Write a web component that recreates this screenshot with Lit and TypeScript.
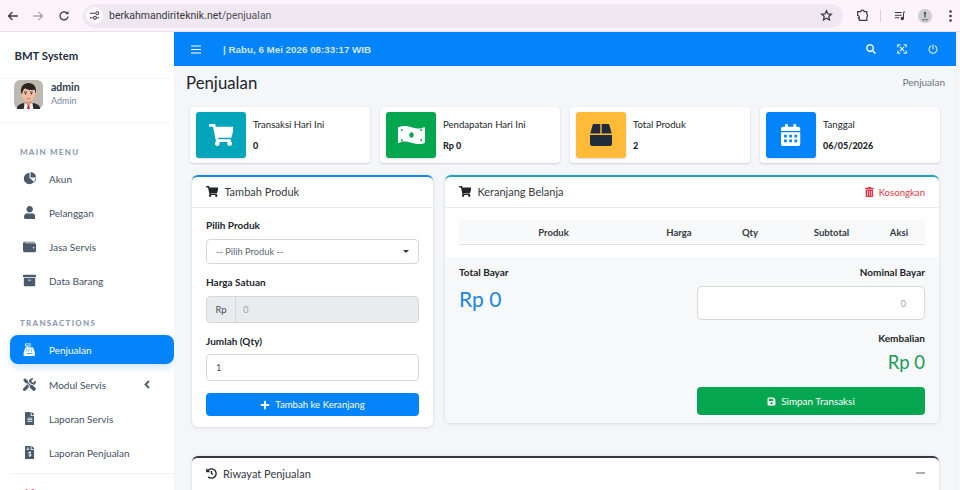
import { LitElement, html, css } from "lit";
import { customElement } from "lit/decorators.js";

const fa = (vb: string, d: string, cls = "") =>
  html`<svg class="fa ${cls}" viewBox="${vb}" fill="currentColor" fill-rule="evenodd"><path d="${d}"></path></svg>`;

const CART = "M528.12 301.319l47.273-208C578.806 78.301 567.391 64 551.99 64H159.208l-9.166-44.81C147.758 8.021 137.93 0 126.529 0H24C10.745 0 0 10.745 0 24v16c0 13.255 10.745 24 24 24h69.883l70.248 343.435C147.325 417.1 136 435.222 136 456c0 30.928 25.072 56 56 56s56-25.072 56-56c0-15.674-6.447-29.835-16.824-40h209.647C430.447 426.165 424 440.326 424 456c0 30.928 25.072 56 56 56s56-25.072 56-56c0-22.172-12.888-41.332-31.579-50.405l5.517-24.276c3.413-15.018-8.002-29.319-23.403-29.319H218.117l-6.545-32h293.145c11.206 0 20.92-7.754 23.403-18.681z";
const USER = "M224 256c70.7 0 128-57.3 128-128S294.7 0 224 0 96 57.3 96 128s57.3 128 128 128zm89.6 32h-16.7c-22.2 10.2-46.9 16-72.9 16s-50.6-5.8-72.9-16h-16.7C60.2 288 0 348.2 0 422.4V464c0 26.5 21.5 48 48 48h352c26.5 0 48-21.5 48-48v-41.6c0-74.2-60.2-134.4-134.4-134.4z";
const SEARCH = "M505 442.7L405.3 343c-4.5-4.5-10.6-7-17-7H372c27.6-35.3 44-79.7 44-128C416 93.1 322.9 0 208 0S0 93.1 0 208s93.1 208 208 208c48.3 0 92.7-16.4 128-44v16.3c0 6.4 2.5 12.5 7 17l99.7 99.7c9.4 9.4 24.6 9.4 33.9 0l28.3-28.3c9.4-9.4 9.4-24.6.1-34zM208 336c-70.7 0-128-57.2-128-128 0-70.7 57.2-128 128-128 70.7 0 128 57.2 128 128 0 70.7-57.2 128-128 128z";
const PLUS = "M416 208H272V64c0-17.67-14.33-32-32-32h-32c-17.67 0-32 14.33-32 32v144H32c-17.67 0-32 14.33-32 32v32c0 17.67 14.33 32 32 32h144v144c0 17.67 14.33 32 32 32h32c17.67 0 32-14.33 32-32V304h144c17.67 0 32-14.33 32-32v-32c0-17.67-14.33-32-32-32z";
const PIE = "M256 32a224 224 0 1 0 224 224H256zM296 0v216h216A216 216 0 0 0 296 0zM300 260h212a216 216 0 0 1-62 150z";
const WALLET = "M462 128H80a16 16 0 0 1 0-32h384a16 16 0 0 0 0-32H64a64 64 0 0 0-64 64v288a64 64 0 0 0 64 64h398c28 0 50-21 50-48V176c0-27-22-48-50-48zm-46 208a32 32 0 1 1 0-64 32 32 0 0 1 0 64z";
const ARCHIVE = "M32 448c0 18 14 32 32 32h384c18 0 32-14 32-32V160H32zm160-212c0-7 5-12 12-12h104c7 0 12 5 12 12v8c0 7-5 12-12 12H204c-7 0-12-5-12-12zM480 32H32C14 32 0 46 0 64v48c0 9 7 16 16 16h480c9 0 16-7 16-16V64c0-18-14-32-32-32z";
const REGISTER = "M80 20h220v110H200v40h170a40 40 0 0 1 38 28l60 190v90a32 32 0 0 1-32 32H56a32 32 0 0 1-32-32v-90l60-190a40 40 0 0 1 38-28h38v-40H80zM112 52v46h156V52zM130 230v30h40v-30zm90 0v30h40v-30zm90 0v30h40v-30zM110 300v30h40v-30zm90 0v30h40v-30zm110 0v30h40v-30zM150 395v30h220v-30z";
const TOOLS = "M502 404L386 288c-22-22-55-27-82-13L198 169v-62L71 12 7 76l95 127h62l106 106c-13 27-8 60 14 82l116 116c14 14 38 14 52 0l50-51c14-14 14-37 0-52zM331 224c28 0 55 11 76 31l19 19c16-7 30-17 43-29 35-36 47-86 36-132-2-9-13-12-19-5l-74 74-68-11-11-68 74-74c7-7 3-18-6-20-46-11-96 1-132 36-27 27-39 63-38 98l82 82c6-1 12-1 18-1zM227 306l-57-57L17 402c-25 25-25 65 0 90s65 25 90 0l124-124c-8-20-9-42-4-62z";
const DOC = "M224 136V0H24C11 0 0 11 0 24v464c0 13 11 24 24 24h336c13 0 24-11 24-24V160H248c-13 0-24-11-24-24zm64 236c0 7-5 12-12 12H108c-7 0-12-5-12-12v-8c0-7 5-12 12-12h168c7 0 12 5 12 12zm0-64c0 7-5 12-12 12H108c-7 0-12-5-12-12v-8c0-7 5-12 12-12h168c7 0 12 5 12 12zm0-72v8c0 7-5 12-12 12H108c-7 0-12-5-12-12v-8c0-7 5-12 12-12h168c7 0 12 5 12 12zm96-114v6H256V0h6c6 0 12 3 17 7l98 98c4 5 7 11 7 17z";
const DOCUSD = "M377 105L279 7c-5-4-11-7-17-7h-6v128h128v-6c0-6-3-12-7-17zm-153 31V0H24C11 0 0 11 0 24v464c0 13 11 24 24 24h336c13 0 24-11 24-24V160H248c-13 0-24-11-24-24zM64 72c0-4 4-8 8-8h80c4 0 8 4 8 8v16c0 4-4 8-8 8H72c-4 0-8-4-8-8zm0 64c0-4 4-8 8-8h80c4 0 8 4 8 8v16c0 4-4 8-8 8H72c-4 0-8-4-8-8zm144 263v24c0 4-4 8-8 8h-16c-4 0-8-4-8-8v-24c-11-1-22-5-32-11-4-2-4-8-1-11l12-11c3-3 7-3 10-1 4 2 8 3 12 3h28c7 0 12-6 12-13 0-6-4-11-9-12l-45-14c-19-6-32-24-32-44 0-25 19-45 45-46v-24c0-4 4-8 8-8h16c4 0 8 4 8 8v24c11 1 22 5 32 11 4 2 4 8 1 11l-12 11c-3 3-7 3-10 1-4-2-8-3-12-3h-28c-7 0-12 6-12 13 0 6 4 11 9 12l45 14c19 6 32 24 32 44 0 25-19 45-45 46z";
const BOX = "M3.800 0H10.300V9.500H.3L2.600.9A1.200 1.200 0 0 1 3.800 0zM11.700 0H18.200A1.200 1.200 0 0 1 19.400.9L21.700 9.500H11.700zM0 11H22V20A2 2 0 0 1 20 22H2A2 2 0 0 1 0 20z";
const CALENDAR = "M12 192h424c7 0 12 5 12 12v260c0 27-21 48-48 48H48c-27 0-48-21-48-48V204c0-7 5-12 12-12zM72 248v64h64v-64zm120 0v64h64v-64zm120 0v64h64v-64zM72 360v64h64v-64zm120 0v64h64v-64zm120 0v64h64v-64zM448 148v-36c0-27-21-48-48-48h-48V12c0-7-5-12-12-12h-40c-7 0-12 5-12 12v52H160V12c0-7-5-12-12-12h-40c-7 0-12 5-12 12v52H48C21 64 0 85 0 112v36c0 7 5 12 12 12h424c7 0 12-5 12-12z";
const TRASH = "M32 464a48 48 0 0 0 48 48h288a48 48 0 0 0 48-48V128H32zm272-256a16 16 0 0 1 32 0v224a16 16 0 0 1-32 0zm-96 0a16 16 0 0 1 32 0v224a16 16 0 0 1-32 0zm-96 0a16 16 0 0 1 32 0v224a16 16 0 0 1-32 0zM432 32H312l-9-19a24 24 0 0 0-22-13H167a24 24 0 0 0-21 13l-9 19H16A16 16 0 0 0 0 48v32a16 16 0 0 0 16 16h416a16 16 0 0 0 16-16V48a16 16 0 0 0-16-16z";
const SAVE = "M433.9 129.900l-83.900-83.900A48 48 0 0 0 316.100 32H48C21.500 32 0 53.500 0 80v352c0 26.500 21.500 48 48 48h352c26.500 0 48-21.500 48-48V163.900a48 48 0 0 0-14.100-34zM224 416c-35.300 0-64-28.700-64-64s28.700-64 64-64 64 28.700 64 64-28.700 64-64 64zM320 112V212c0 6.600-5.400 12-12 12H76c-6.600 0-12-5.400-12-12V108c0-6.600 5.400-12 12-12h228c9 0 16 7 16 16z";
const HISTORY = "M504 255.500C504 392 392.500 504 256 504c-59 0-113-20.600-155.600-55-11-8.900-11.900-25.400-1.900-35.400l11.300-11.300c8.600-8.600 22.300-9.500 31.800-1.900C173.100 425.100 212.800 440 256 440c101.700 0 184-82.300 184-184S357.700 72 256 72c-48.800 0-93.100 19-126.100 49.900l50.800 50.800c10.100 10.100 2.900 27.300-11.300 27.300H24c-8.800 0-16-7.200-16-16V38.600c0-14.300 17.200-21.400 27.300-11.300l49.400 49.400C129.400 32.100 189.500 8 256 8c136.500 0 248 111.500 248 247.500zM272 136h-32c-8.800 0-16 7.200-16 16v113l70 54c7 5.400 17 4.200 22.500-2.800l19.600-25.200c5.400-7 4.200-17-2.800-22.500L288 240v-88c0-8.800-7.200-16-16-16z";
const MONEY = "M24 40C110 0 200 10 320 46S530 90 616 44C628 38 640 46 640 58V398C640 406 636 412 630 416 540 456 450 450 320 414S110 372 24 416C12 422 0 414 0 402V58C0 50 18 43 24 40zM320 165C290 165 268 194 268 230S290 295 320 295 372 266 372 230 350 165 320 165zM90 90A24 24 0 1 0 90 138 24 24 0 1 0 90 90zM550 85A24 24 0 1 0 550 133 24 24 0 1 0 550 85zM90 330A24 24 0 1 0 90 378 24 24 0 1 0 90 330zM550 325A24 24 0 1 0 550 373 24 24 0 1 0 550 325z";
const POWER_PATH = "M400 54c80 50 112 120 112 202 0 137-111 248-248 248S16 393 16 256c0-82 32-152 112-202 14-9 34-4 42 11l14 26c7 13 4 30-9 38-48 33-73 75-73 127 0 84 68 152 152 152s152-68 152-152c0-52-25-94-73-127-13-8-16-25-9-38l14-26c8-15 28-20 42-11z";

const EXPAND = html`<svg class="fa" viewBox="0 0 24 24" fill="none" stroke="currentColor" stroke-width="3"><path d="M7 7l10 10M17 7L7 17"></path><path d="M2 8V2h6M16 2h6v6M22 16v6h-6M8 22H2v-6"></path></svg>`;
const POWER = html`<svg class="fa" viewBox="0 0 24 24" fill="none" stroke="currentColor" stroke-width="2.500" stroke-linecap="round"><path d="M12 2v10"></path><path d="M7 4.800a9.500 9.500 0 1 0 10 0"></path></svg>`;
const AVATAR = html`<svg class="avatar" viewBox="0 0 30 30">
  <rect width="30" height="30" rx="6" fill="#bdb8b0"></rect>
  <path d="M3 30c0-5 5-6 12-7 7 1 12 2 12 7z" fill="#2b2b30"></path>
  <path d="M11 23l4 3 4-3 1 7H10z" fill="#f2f2f2"></path><path d="M14.300 25h1.400l.6 5h-2.600z" fill="#c8202a"></path>
  <path d="M12 19h6v5l-3 2-3-2z" fill="#d89c82"></path>
  <ellipse cx="15" cy="14" rx="7" ry="8.500" fill="#efbfa4"></ellipse>
  <path d="M7.500 14C6 7 10 3 15 3s9 4 7.500 11l-1-4c-3 .5-8 .5-10-1.500-1 1-2.500 2-3 5.500z" fill="#2a2524"></path>
  <path d="M10.500 12.500h3M16.500 12.500h3" stroke="#2a2524" stroke-width=".9"></path>
  <circle cx="12" cy="14.300" r=".8" fill="#2a2524"></circle><circle cx="18" cy="14.300" r=".8" fill="#2a2524"></circle>
  <path d="M12.800 19c1.500.8 3 .8 4.400 0" stroke="#a8503f" stroke-width=".7" fill="none"></path>
</svg>`;

const menu1 = [
  ["Akun", fa("0 0 512 512", PIE)],
  ["Pelanggan", fa("0 0 448 512", USER)],
  ["Jasa Servis", fa("0 0 512 512", WALLET)],
  ["Data Barang", fa("0 0 512 512", ARCHIVE)],
] as const;

@customElement("browser-bar")
class BrowserBar extends LitElement {
  static styles = css`
    :host { display: flex; align-items: center; height: 32px; background: #fdf4fb; border-bottom: 1px solid #e6e0e8; box-sizing: border-box; color: #3c3a41; }
    svg { display: block; flex: none; }
    .nav { width: 12px; height: 12px; margin-left: 7px; }
    .nav.dim { color: #a9a6ad; margin-left: 13px; }
    .nav.re { margin-left: 14px; }
    .url { flex: 1; height: 24px; margin: 0 0 0 13px; background: #efe8f2; border-radius: 12px; display: flex; align-items: center; padding: 0 10.500px 0 3px; font: 10.500px "Roboto", sans-serif; color: #3a3840; }
    .tune { width: 17px; height: 17px; border-radius: 50%; background: #fdf9fd; display: grid; place-items: center; margin-right: 6px; }
    .tune svg { width: 11px; height: 11px; }
    .path { color: #55525a; }
    .star { width: 13px; height: 13px; margin-left: auto; }
    .puzzle { width: 13px; height: 13px; margin-left: 13px; }
    .sep { width: 1px; height: 12px; background: #d9d4dc; margin-left: 11px; }
    .queue { width: 12px; height: 12px; margin-left: 13px; }
    .prof { width: 14px; height: 14px; margin-left: 12px; border-radius: 50%; background: #cfcfd2; }
    .dots { width: 3px; height: 12px; margin-left: 16.500px; margin-right: 8.500px; }
  `;
  render() {
    return html`
      <svg class="nav" viewBox="0 0 12 12" fill="none" stroke="currentColor" stroke-width="1.300"><path d="M11 6H1.500M5.500 2L1.500 6l4 4"></path></svg>
      <svg class="nav dim" viewBox="0 0 12 12" fill="none" stroke="currentColor" stroke-width="1.300"><path d="M1 6h9.500M6.500 2l4 4-4 4"></path></svg>
      <svg class="nav re" viewBox="0 0 12 12" fill="none" stroke="currentColor" stroke-width="1.300"><path d="M10 6.500A4 4 0 1 1 8.800 3"></path><path d="M10.500 1v3.200H7.300z" fill="currentColor" stroke="none"></path></svg>
      <div class="url">
        <span class="tune"><svg viewBox="0 0 12 12" fill="none" stroke="#3c3a41" stroke-width="1.100"><path d="M1 3.500h5.500M1 8.500h3"></path><circle cx="9" cy="3.500" r="1.600"></circle><circle cx="6.500" cy="8.500" r="1.600"></circle><path d="M9 8.500h2"></path></svg></span>
        <span>berkahmandiriteknik.net<span class="path">/penjualan</span></span>
        <svg class="star" viewBox="0 0 24 24" fill="none" stroke="currentColor" stroke-width="2.200"><path d="M12 3l2.700 6 6.300.6-4.800 4.300 1.500 6.400L12 17l-5.700 3.300 1.500-6.400L3 9.600 9.300 9z"></path></svg>
      </div>
      <svg class="puzzle" viewBox="0 0 24 24" fill="none" stroke="currentColor" stroke-width="2.200"><path d="M3 5h6a3 3 0 0 1 6 0h5v5a3 3 0 0 1 0 5v6H6v-4H3c2 0 3-1 3-2.500S5 12 3 12z"></path></svg>
      <span class="sep"></span>
      <svg class="queue" viewBox="0 0 14 14" fill="none" stroke="currentColor" stroke-width="1.200"><path d="M1 3h8M1 6h8M1 9h5"></path><path d="M11 2.500V10"></path><circle cx="9.700" cy="10" r="1.400" fill="currentColor"></circle><path d="M11 2.500h2"></path></svg>
      <svg class="prof" viewBox="0 0 14 14"><circle cx="7" cy="7" r="7" fill="#cfcfd2"></circle><path d="M7 2l1.500 3H7.600v3.500H6.400V5H5.500zM4 10.500h6v.7H4z" fill="#3d4658"></path></svg>
      <svg class="dots" viewBox="0 0 3 12" fill="currentColor"><circle cx="1.500" cy="1.500" r="1.300"></circle><circle cx="1.500" cy="6" r="1.300"></circle><circle cx="1.500" cy="10.500" r="1.300"></circle></svg>
    `;
  }
}

@customElement("side-bar")
class SideBar extends LitElement {
  static styles = css`
    :host { display: block; width: 174px; flex: none; background: #fff; overflow: hidden; font-family: "Lato", "Noto Sans", sans-serif; }
    .brand { height: 47px; display: flex; align-items: center; padding-left: 14.500px; font-size: 11.300px; font-weight: 700; color: #1f2d3d; border-bottom: 1px solid #f3f4f6; box-sizing: border-box; }
    .user { height: 44px; display: flex; gap: 8px; padding: 1px 0 0 14px; box-sizing: border-box; border-bottom: 1px solid #f3f4f6; margin-right: 5px; }
    .avatar { width: 29px; height: 29px; display: block; flex: none; }
    .names { display: flex; flex-direction: column; }
    .nm { font-size: 10.500px; font-weight: 700; color: #2f3d50; line-height: 14px; }
    .rl { font-size: 9px; color: #73859b; line-height: 13px; }
    .hd { font-size: 8px; font-weight: 900; letter-spacing: 1.250px; color: #8f9db0; padding-left: 20px; line-height: 10px; }
    .hd.a { margin-top: 24px; margin-bottom: 5px; }
    .hd.b { margin-top: 20px; margin-bottom: 7px; }
    .it { height: 34px; display: flex; align-items: center; padding-left: 13px; margin-left: 10px; font-size: 10px; color: #3f4f60; position: relative; box-sizing: border-box; }
    .ic { width: 13px; height: 13px; display: grid; place-items: center; margin-right: 13px; color: #4b5b6c; flex: none; margin-top: -1px; }
    .fa { display: block; height: 13px; max-width: 14px; }
    .active { height: 29px; margin: 0 0 4px 10px; background: #0384fb; color: #fff; border-radius: 8px; box-shadow: 0 3px 8px rgba(3, 132, 251, .22); }
    .active .ic { color: #fff; }
    .chev { position: absolute; left: 134px; top: 12px; width: 6px; height: 9px; color: #4b5b6c; }
    .rule { height: 1px; background: #f0f1f3; margin: 3px 0 0 10px; }
    .log { height: 16px; padding: 14px 0 0 23px; box-sizing: content-box; color: #dc3545; }
  `;
  render() {
    const item = (n: string, i: unknown) => html`<div class="it"><span class="ic">${i}</span>${n}</div>`;
    return html`
      <div class="brand">BMT System</div>
      <div class="user">${AVATAR}<div class="names"><span class="nm">admin</span><span class="rl">Admin</span></div></div>
      <div class="hd a">MAIN MENU</div>
      ${menu1.map(([n, i]) => item(n, i))}
      <div class="hd b">TRANSACTIONS</div>
      <div class="it active"><span class="ic">${fa("0 0 512 512", REGISTER)}</span>Penjualan</div>
      <div class="it"><span class="ic">${fa("0 0 512 512", TOOLS)}</span>Modul Servis
        <svg class="chev" viewBox="0 0 6 9" fill="none" stroke="currentColor" stroke-width="1.800"><path d="M5 1L1.500 4.500 5 8"></path></svg></div>
      ${item("Laporan Servis", fa("0 0 384 512", DOC))}
      ${item("Laporan Penjualan", fa("0 0 384 512", DOCUSD))}
      <div class="rule"></div>
      <div class="log">${fa("0 0 512 512", POWER_PATH)}</div>
    `;
  }
}

@customElement("app-root")
class AppRoot extends LitElement {
  static styles = css`
    :host { display: block; width: 960px; height: 490px; overflow: hidden; background: #f4f6f9; font-family: "Lato", "Noto Sans", sans-serif; color: #212529; }
    * { box-sizing: border-box; }
    .fa { display: block; }
    .body { display: flex; height: 458px; }
    .main { flex: 1; min-width: 0; display: flex; flex-direction: column; }
    .scroll { width: 4px; flex: none; background: #f4f6f9; border-left: 1px solid #eceef2; }
    .nav { height: 34px; flex: none; background: #0384fb; display: flex; align-items: center; padding: 0 18px 0 17px; color: #fff; }
    .nav .burger { width: 10px; height: 9px; }
    .clock { margin-left: 22px; font: 700 9.800px "Liberation Sans", sans-serif; color: #cfe6ff; }
    .nicons { margin-left: auto; display: flex; gap: 21px; color: #e3f0ff; }
    .nicons .fa { width: 10px; height: 10px; }
    .page { flex: 1; min-height: 0; overflow: hidden; padding: 0 16px 0 11px; }
    .ph { display: flex; justify-content: space-between; align-items: center; height: 36px; padding-bottom: 4px; }
    h1 { margin: 0 0 0 1px; font-size: 16.800px; font-weight: 400; color: #212529; }
    .crumb { font-size: 10px; color: #6c757d; margin-top: -1px; margin-right: -5px; }
    .stats { display: grid; grid-template-columns: repeat(4, 180px); gap: 10px; margin: 5px 0 0 5px; }
    .stat { height: 56px; background: #fff; border-radius: 3px; box-shadow: 0 0 1px rgba(0,0,0,.14), 0 1px 2px rgba(0,0,0,.14); padding: 5px 6px; display: flex; gap: 7px; }
    .box { width: 50px; height: 46px; border-radius: 3px; display: grid; place-items: center; color: #fff; flex: none; box-shadow: 0 1px 2px rgba(0,0,0,.15); }
    .box .fa { height: 22px; max-width: 27px; }
    .teal { background: #02a5ba; } .green { background: #04a650; } .yellow { background: #ffba38; color: #1f2d3d; } .blue { background: #0384fb; }
    .st { display: flex; flex-direction: column; font-size: 9.600px; padding-top: 6px; }
    .st b { font-size: 9px; margin-top: 8px; font-weight: 900; line-height: 13px; }
    .st span { line-height: 13px; }
    .cols { display: grid; grid-template-columns: 241px 494px; gap: 12px; align-items: start; margin: 12px 0 0 7px; }
    .card { background: #fff; border-radius: 6px; border-top: 2px solid; box-shadow: 0 0 2px rgba(0,0,0,.08), 0 1px 4px rgba(0,0,0,.09); }
    .cb { border-color: #1a86e8; } .ct { border-color: #1fa2b8; }
    .ch { height: 31px; display: flex; align-items: center; padding: 0 14px 2px; border-bottom: 1px solid #e7e9ec; font-size: 11px; color: #343a40; }
    .ch .fa { height: 11px; margin-right: 6px; color: #1f2529; }
    .cbody { padding: 11px 14px 11px; }
    label { display: block; font-size: 10px; font-weight: 700; line-height: 13px; margin-bottom: 7px; color: #212529; }
    .inp { height: 25px; border: 1px solid #d4d8dd; border-radius: 4px; background: #fff; display: flex; align-items: center; padding: 0 9px; font-size: 9.300px; color: #495057; }
    .sel { justify-content: space-between; margin-bottom: 12px; color: #5d666f; }
    .sel i { width: 0; height: 0; border: 3px solid transparent; border-top: 3.500px solid #343a40; border-bottom: 0; }
    .grp { height: 27px; display: flex; border: 1px solid #d4d8dd; border-radius: 4px; background: #e9ecef; margin-bottom: 12px; font-size: 9.500px; }
    .grp span { width: 29px; display: grid; place-items: center; border-right: 1px solid #d4d8dd; color: #495057; }
    .grp em { font-style: normal; padding-left: 7px; align-self: center; color: #9aa1a8; }
    .lq { margin-bottom: 6px; }
    .qty { height: 27px; margin-bottom: 12px; }
    .btn { display: flex; align-items: center; justify-content: center; gap: 5px; border-radius: 4px; color: #fff; font-size: 9.900px; }
    .btn .fa { width: 9px; height: 9px; }
    .bb { height: 23px; background: #0384fb; font-size: 9.600px; }
    .bb .fa { width: 10px; height: 10px; }
    .kos { margin-left: auto; display: flex; align-items: center; color: #dc3545; font-size: 9.600px; margin-top: 2px; }
    .kos .fa { height: 10px; margin-right: 5px; color: #dc3545; }
    .tw { padding: 12px 14px; }
    .th { display: grid; grid-template-columns: 189px 62px 80px 83px 52px; height: 25px; align-items: center; background: #f8f9fa; border-bottom: 1.500px solid #dee2e6; font-size: 9.500px; font-weight: 700; color: #343a40; text-align: center; }
    .foot { background: #f7f8f9; border-radius: 0 0 6px 6px; padding: 9px 14px 8px; display: flex; justify-content: space-between; height: 166px; }
    .foot label { margin-bottom: 0; }
    .tot { font-size: 21px; color: #1a86e8; line-height: 27px; margin-top: 6px; }
    .right { width: 228px; display: flex; flex-direction: column; align-items: flex-end; }
    .pay { width: 100%; height: 34px; justify-content: flex-end; padding-right: 18px; margin-top: 7px; color: #9aa1a8; font-size: 9px; border-radius: 5px; }
    .kem { margin-top: 12px; }
    .rp { font-size: 18.500px; color: #169c55; line-height: 26px; margin-top: 4px; }
    .bg { height: 28px; width: 100%; background: #04a650; margin-top: 12px; }
    .hist { border-color: #343a40; margin: 29px 0 0 7px; width: 747px; height: 120px; }
    .hist .ch { border-bottom: 0; height: 30px; padding-bottom: 0; }
    .min { margin-left: auto; width: 9px; height: 2px; background: #a9aeb3; }
  `;
  render() {
    return html`
      <browser-bar></browser-bar>
      <div class="body">
        <side-bar></side-bar>
        <div class="main">
          <header class="nav">
            <svg class="burger" viewBox="0 0 10 9" fill="none" stroke="currentColor" stroke-width="1.200"><path d="M0 1h10M0 4.500h10M0 8h10"></path></svg>
            <span class="clock">| Rabu, 6 Mei 2026 08:33:17 WIB</span>
            <div class="nicons">${fa("0 0 512 512", SEARCH)}${EXPAND}${POWER}</div>
          </header>
          <main class="page">
            <div class="ph"><h1>Penjualan</h1><span class="crumb">Penjualan</span></div>
            <div class="stats">
              ${this.stat("teal", fa("0 0 576 512", CART), "Transaksi Hari Ini", "0")}
              ${this.stat("green", fa("0 0 640 456", MONEY), "Pendapatan Hari Ini", "Rp 0")}
              ${this.stat("yellow", fa("0 0 22 22", BOX), "Total Produk", "2")}
              ${this.stat("blue", fa("0 0 448 512", CALENDAR), "Tanggal", "06/05/2026")}
            </div>
            <div class="cols">
              <section class="card cb">
                <div class="ch">${fa("0 0 576 512", CART)}Tambah Produk</div>
                <div class="cbody">
                  <label>Pilih Produk</label>
                  <div class="inp sel">-- Pilih Produk --<i></i></div>
                  <label>Harga Satuan</label>
                  <div class="grp"><span>Rp</span><em>0</em></div>
                  <label class="lq">Jumlah (Qty)</label>
                  <div class="inp qty">1</div>
                  <div class="btn bb">${fa("0 0 448 512", PLUS)}Tambah ke Keranjang</div>
                </div>
              </section>
              <section class="card ct">
                <div class="ch">${fa("0 0 576 512", CART)}Keranjang Belanja
                  <span class="kos">${fa("0 0 448 512", TRASH)}Kosongkan</span></div>
                <div class="tw"><div class="th"><span>Produk</span><span>Harga</span><span>Qty</span><span>Subtotal</span><span>Aksi</span></div></div>
                <div class="foot">
                  <div><label>Total Bayar</label><div class="tot">Rp 0</div></div>
                  <div class="right">
                    <label>Nominal Bayar</label>
                    <div class="inp pay">0</div>
                    <label class="kem">Kembalian</label>
                    <div class="rp">Rp 0</div>
                    <div class="btn bg">${fa("0 0 448 512", SAVE)}Simpan Transaksi</div>
                  </div>
                </div>
              </section>
            </div>
            <section class="card hist"><div class="ch">${fa("0 0 512 512", HISTORY)}Riwayat Penjualan<span class="min"></span></div></section>
          </main>
        </div>
        <div class="scroll"></div>
      </div>
    `;
  }
  stat(c: string, i: unknown, l: string, v: string) {
    return html`<div class="stat"><div class="box ${c}">${i}</div><div class="st"><span>${l}</span><b>${v}</b></div></div>`;
  }
}
void BrowserBar; void SideBar; void AppRoot;
